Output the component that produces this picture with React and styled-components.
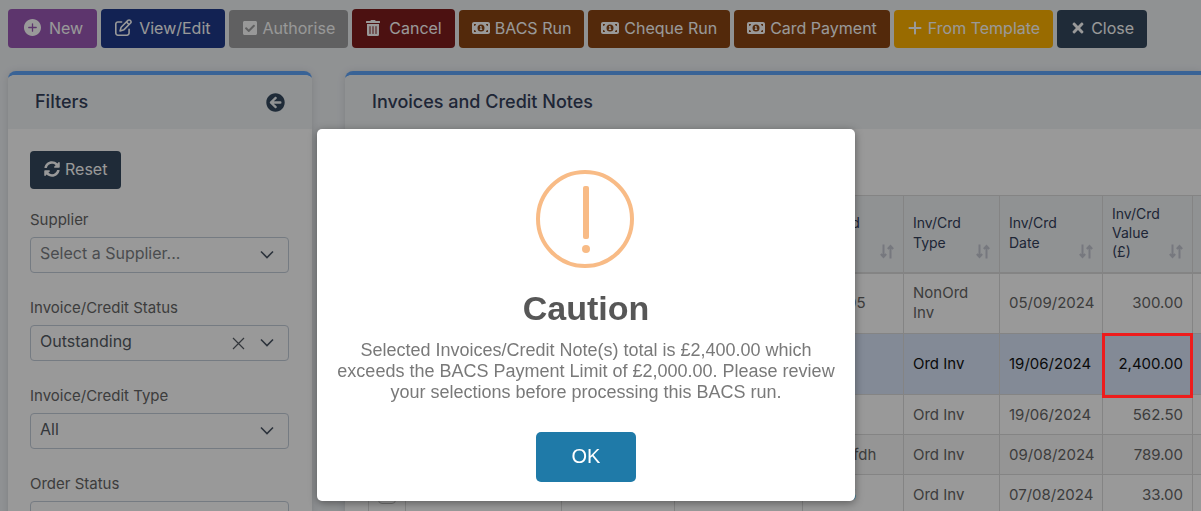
import React, { useState } from 'react';
import styled, { createGlobalStyle, css } from 'styled-components';
import { FaCheckSquare, FaTimes, FaSyncAlt, FaArrowCircleLeft, FaTrashAlt } from 'react-icons/fa';
import { FaMoneyBill1, FaPlus, FaRegPenToSquare } from 'react-icons/fa6';
import { IoIosAddCircle } from 'react-icons/io';

const GlobalStyle = createGlobalStyle`
    * {
        box-sizing: border-box;
    }
    body {
        margin: 0;
        overflow: hidden;
        background: #f0f3f6;
        font-family: Inter, 'Liberation Sans', sans-serif;
        font-size: 16px;
        color: #666;
    }
    button, select {
        font-family: inherit;
        font-size: inherit;
    }
`

const Page = styled.div`
    height: 100vh;
    overflow: hidden;
    padding: 9px 0 0 8px;
`

const Toolbar = styled.div`
    display: flex;
    align-items: flex-end;
    gap: 4px;
    margin-bottom: 23px;
`

const Button = styled.button`
    display: inline-flex;
    align-items: center;
    flex-shrink: 0;
    gap: ${props => props.$gap || 5}px;
    height: ${props => props.$tall ? 39 : 38}px;
    padding: 0 ${props => props.$wide ? 14 : 13}px 2px;
    border: none;
    border-radius: 4px;
    background: ${props => props.$color};
    color: white;
    line-height: 24px;
    opacity: ${props => props.disabled ? 0.9 : 1};
`

const Columns = styled.div`
    display: grid;
    grid-template-columns: 304px minmax(0, 1fr);
    gap: 33px;
`

const Card = styled.section`
    border-top: 4px solid #60a5fa;
    border-radius: 8px ${props => props.$bleed ? 0 : '8px'} 0 0;
    background: white;
    box-shadow: 0 1px 8px rgba(0, 0, 0, 0.12);
    height: 640px;
    overflow: hidden;
`

const CardHeader = styled.header`
    display: flex;
    align-items: center;
    justify-content: space-between;
    height: 54px;
    padding: 0 27px;
    background: #f0f3f6;
    color: #34405a;
`

const CardTitle = styled.h2`
    margin: 0;
    font-size: 18px;
    font-weight: 500;
    line-height: 24px;
`

const IconButton = styled.button`
    display: flex;
    padding: 0;
    border: none;
    background: none;
    color: #34495e;
`

const FilterBody = styled.div`
    padding: 22px 23px 22px 22px;
`

const Field = styled.div`
    margin-top: 20px;
`

const Label = styled.label`
    display: block;
    margin-bottom: 6px;
    font-size: 15px;
    line-height: 22px;
    height: 22px;
    color: #666;
`

const SelectBox = styled.div`
    position: relative;
    height: 36px;
    margin-bottom: 24px;
`

const Select = styled.select`
    appearance: none;
    width: 100%;
    height: 100%;
    padding: 0 60px 4px 9px;
    border: 1px solid #c3cdd9;
    border-radius: 4px;
    background: white;
    color: ${props => props.$placeholder ? '#7c7f84' : '#555b63'};
`

const Chevron = styled.svg`
    position: absolute;
    right: 15px;
    top: 13px;
    pointer-events: none;
`

const ClearButton = styled.button`
    position: absolute;
    right: 44px;
    top: 12px;
    display: flex;
    padding: 0;
    border: none;
    background: none;
`

const TableWrap = styled.div`
    padding: 66px 0 0 23px;
`

const Table = styled.table`
    table-layout: fixed;
    width: 944px;
    border-collapse: collapse;
`

const cell = css`
    border: 1px solid #dcdcdc;
    padding: 9px;
    font-weight: 400;
    line-height: 20px;
    text-align: left;
`

const Th = styled.th`
    ${cell}
    position: relative;
    height: 77px;
    padding: 8px 30px 10px 9px;
    border-bottom: 2px solid #dcdcdc;
    background: #f0f3f6;
    color: #34405a;
    font-size: 14px;
    line-height: ${props => props.$dense ? 19 : 20}px;
`

const SortIcon = styled.svg`
    position: absolute;
    right: 9px;
    bottom: 13px;
`

const Td = styled.td`
    ${cell}
    font-size: 15px;
    text-align: ${props => props.$right ? 'right' : 'left'};
`

const Row = styled.tr`
    height: ${props => props.$large ? 61 : 40}px;
    color: ${props => props.$selected ? '#111' : '#666'};
    background: white;
    &:nth-child(even) {
        background: ${props => props.$selected ? '#dbe7fb' : '#f9f9f9'};
    }
`

const FlaggedTd = styled(Td)`
    position: relative;
    &::after {
        content: '';
        position: absolute;
        inset: -1px -1px -4px -1px;
        border: 3px solid #ee1c1c;
        z-index: 5;
    }
`

const Checkbox = styled.input`
    appearance: none;
    display: block;
    width: 18px;
    height: 18px;
    margin: 0;
    border: 1px solid #bbb;
    border-radius: 4px;
    background: white;
`

const RefLink = styled.a`
    color: #2f7fc1;
    text-decoration: none;
`

const Overlay = styled.div`
    position: fixed;
    inset: 0;
    z-index: 3;
    background: rgba(0, 0, 0, 0.4);
`

const ModalLayer = styled.div`
    position: fixed;
    inset: 0;
    z-index: 10;
    display: flex;
    align-items: flex-start;
    justify-content: center;
    padding: 129px 29px 0 0;
`

const Modal = styled.div`
    display: flex;
    flex-direction: column;
    align-items: center;
    width: 538px;
    padding: 41px 18px 19px;
    border-radius: 5px;
    background: white;
    box-shadow: 0 2px 8px rgba(0, 0, 0, 0.4);
    font-family: 'Liberation Sans', Arial, sans-serif;
    text-align: center;
`

const ModalTitle = styled.h1`
    margin: 19px 0 11px;
    color: #575757;
    font-size: 34px;
    font-weight: 700;
    line-height: 42px;
`

const ModalText = styled.p`
    margin: 0 0 29px;
    color: #797979;
    font-size: 18px;
    line-height: 21px;
`

const OkButton = styled.button`
    width: 100px;
    height: 50px;
    padding: 0 0 2px;
    border: none;
    border-radius: 5px;
    background: #1f7aa8;
    color: white;
    font-size: 20px;
`

const actions = [
    { label: 'New', icon: <IoIosAddCircle size={21} />, color: '#9b59b6', tall: true, wide: true, gap: 6 },
    { label: 'View/Edit', icon: <FaRegPenToSquare size={17} />, color: '#1e3a8a', tall: true, wide: true, gap: 7 },
    { label: 'Authorise', icon: <FaCheckSquare width={14} height={16} />, color: '#999', disabled: true },
    { label: 'Cancel', icon: <FaTrashAlt width={14} height={16} />, color: '#7f1d1d', tall: true, gap: 8 },
    { label: 'BACS Run', icon: <FaMoneyBill1 size={18} />, color: '#8b4513' },
    { label: 'Cheque Run', icon: <FaMoneyBill1 size={18} />, color: '#8b4513' },
    { label: 'Card Payment', icon: <FaMoneyBill1 size={18} />, color: '#8b4513' },
    { label: 'From Template', icon: <FaPlus width={14} height={16} />, color: '#ffb300' },
    { label: 'Close', icon: <FaTimes width={12} height={17} />, color: '#34495e' },
]

const filters = [
    { id: 'supplier', label: 'Supplier', value: 'Select a Supplier...', placeholder: true },
    { id: 'status', label: 'Invoice/Credit Status', value: 'Outstanding', clear: true },
    { id: 'type', label: 'Invoice/Credit Type', value: 'All' },
    { id: 'order', label: 'Order Status', value: 'All' },
]

const widths = [37, 156, 113, 128, 101, 96, 103, 90, 120]

const rows = [
    { id: 1, ref: 'INV005', type: 'NonOrd Inv', date: '05/09/2024', value: '300.00', large: true },
    { id: 2, ref: '', type: 'Ord Inv', date: '19/06/2024', value: '2,400.00', large: true, selected: true },
    { id: 3, ref: '', type: 'Ord Inv', date: '19/06/2024', value: '562.50' },
    { id: 4, ref: 'hfghgfdh', type: 'Ord Inv', date: '09/08/2024', value: '789.00' },
    { id: 5, ref: 'INV05', type: 'Ord Inv', date: '07/08/2024', value: '33.00', link: true },
]

const Sort = () => (
    <SortIcon width="14" height="15" viewBox="0 0 14 15" fill="none" stroke="#c5c8d2" strokeWidth="2">
        <path d="M3.5 0.5V13M0.8 10L3.5 13L6.2 10M10.5 14.5V2M7.8 5L10.5 2L13.2 5" />
    </SortIcon>
)

const App = () => {
    const [open, setOpen] = useState(true)

    return (
        <>
            <GlobalStyle />
            <Page>
                <Toolbar>
                    {actions.map(a => (
                        <Button key={a.label} $color={a.color} $tall={a.tall} $wide={a.wide} $gap={a.gap} disabled={a.disabled}>
                            {a.icon}{a.label}
                        </Button>
                    ))}
                </Toolbar>
                <Columns>
                    <Card>
                        <CardHeader>
                            <CardTitle>Filters</CardTitle>
                            <IconButton aria-label="Collapse filters"><FaArrowCircleLeft size={19} /></IconButton>
                        </CardHeader>
                        <FilterBody>
                            <Button $color="#34495e" $wide><FaSyncAlt />Reset</Button>
                            {filters.map(f => (
                                <Field key={f.id}>
                                    <Label htmlFor={f.id}>{f.label}</Label>
                                    <SelectBox>
                                        <Select id={f.id} $placeholder={f.placeholder}>
                                            <option>{f.value}</option>
                                        </Select>
                                        {f.clear && (
                                            <ClearButton aria-label="Clear">
                                                <svg width="13" height="13" viewBox="0 0 13 13" stroke="#555b63" strokeWidth="1.2">
                                                    <path d="M1 1L12 12M12 1L1 12" />
                                                </svg>
                                            </ClearButton>
                                        )}
                                        <Chevron width="14" height="10" viewBox="0 0 14 10" fill="none" stroke="#4a5564" strokeWidth="1.6">
                                            <path d="M1 1.5L7 7.5L13 1.5" />
                                        </Chevron>
                                    </SelectBox>
                                </Field>
                            ))}
                        </FilterBody>
                    </Card>
                    <Card $bleed>
                        <CardHeader>
                            <CardTitle>Invoices and Credit Notes</CardTitle>
                        </CardHeader>
                        <TableWrap>
                            <Table>
                                <colgroup>
                                    {widths.map((w, i) => <col key={i} style={{ width: w }} />)}
                                </colgroup>
                                <thead>
                                    <tr>
                                        <Th /><Th /><Th /><Th />
                                        <Th>Inv/Crd Ref<Sort /></Th>
                                        <Th>Inv/Crd Type<Sort /></Th>
                                        <Th>Inv/Crd Date<Sort /></Th>
                                        <Th $dense>Inv/Crd Value (£)<Sort /></Th>
                                        <Th />
                                    </tr>
                                </thead>
                                <tbody>
                                    {rows.map(r => {
                                        const Value = r.selected ? FlaggedTd : Td
                                        return (
                                            <Row key={r.id} $large={r.large} $selected={r.selected}>
                                                <Td><Checkbox type="checkbox" aria-label="Select invoice" defaultChecked={r.selected} /></Td>
                                                <Td /><Td /><Td />
                                                <Td>{r.link ? <RefLink href="#">{r.ref}</RefLink> : r.ref}</Td>
                                                <Td>{r.type}</Td>
                                                <Td>{r.date}</Td>
                                                <Value $right>{r.value}</Value>
                                                <Td />
                                            </Row>
                                        )
                                    })}
                                </tbody>
                            </Table>
                        </TableWrap>
                    </Card>
                </Columns>
            </Page>
            {open && (
                <>
                    <Overlay />
                    <ModalLayer>
                        <Modal role="dialog" aria-labelledby="modal-title">
                            <svg width="100" height="98" viewBox="0 0 100 98" fill="#f8bb86">
                                <circle cx="49" cy="49" r="47" fill="none" stroke="#f8bb86" strokeWidth="4" />
                                <rect x="47" y="16" width="6" height="53" rx="2" />
                                <circle cx="50" cy="79" r="4" />
                            </svg>
                            <ModalTitle id="modal-title">Caution</ModalTitle>
                            <ModalText>
                                Selected Invoices/Credit Note(s) total is £2,400.00 which exceeds the BACS Payment Limit of £2,000.00. Please review your selections before processing this BACS run.
                            </ModalText>
                            <OkButton onClick={() => setOpen(false)}>OK</OkButton>
                        </Modal>
                    </ModalLayer>
                </>
            )}
        </>
    )
}

export default App;
